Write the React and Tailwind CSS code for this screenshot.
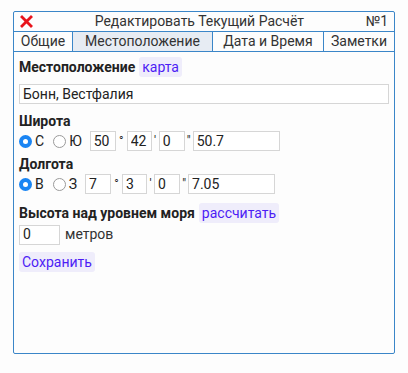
import React, { useState } from 'react'

const Radio = ({ checked, label, onClick }) => (
  <button onClick={onClick} className="flex items-center gap-[3px] mr-[9px]">
    <span
      className={
        checked
          ? 'w-[13px] h-[13px] rounded-full bg-[#1a85f3] flex items-center justify-center'
          : 'w-[13px] h-[13px] rounded-full border border-[#9a9a9a] bg-white'
      }
    >
      {checked && <span className="w-[5px] h-[5px] rounded-full bg-white" />}
    </span>
    <span>{label}</span>
  </button>
)

const Field = ({ value, className }) => (
  <input
    defaultValue={value}
    className={'h-[20px] border border-[#d6d6d6] bg-white px-[3px] outline-none ' + className}
  />
)

const CoordRow = ({ dirs, values }) => {
  const [dir, setDir] = useState(0)
  return (
    <div className="flex items-center h-[20px]">
      <Radio checked={dir === 0} label={dirs[0]} onClick={() => setDir(0)} />
      <Radio checked={dir === 1} label={dirs[1]} onClick={() => setDir(1)} />
      <Field value={values[0]} className="w-[26px] ml-[-1px]" />
      <span className="w-[11px] text-center text-[12px]">°</span>
      <Field value={values[1]} className="w-[25px]" />
      <span className="w-[7px] text-center text-[12px]">'</span>
      <Field value={values[2]} className="w-[26px]" />
      <span className="w-[8px] text-center text-[12px]">"</span>
      <Field value={values[3]} className="w-[87px]" />
    </div>
  )
}

const LinkButton = ({ children }) => (
  <button className="px-[3px] h-[20px] rounded-[3px] bg-[#efedfb] text-[#4d1df5]">{children}</button>
)

export default function App() {
  return (
    <div
      className="w-[408px] h-[373px] bg-[#fdfdfd] pt-[11px] pl-[13px] text-[14px] text-[#222]"
      style={{ fontFamily: 'Roboto, "Noto Sans", sans-serif' }}
    >
      <div className="w-[382px] h-[343px] border border-[#3b86c8] rounded-[2px] bg-[#fdfdfd] flex flex-col">
        <div className="h-[20px] flex items-center border-b border-[#3b86c8] px-[6px]">
          <svg width="13" height="13" viewBox="0 0 13 13">
            <path d="M2 2 L11 11 M11 2 L2 11" stroke="#e8141b" strokeWidth="2.8" strokeLinecap="square" />
          </svg>
          <div className="flex-1 text-center text-[14px] text-[#333]">Редактировать Текущий Расчёт</div>
          <div className="text-[14px] text-[#333]">№1</div>
        </div>
        <div className="h-[20px] flex border-b border-[#3b86c8] text-[14px] text-[#333]">
          <div className="w-[59px] border-r border-[#3b86c8] flex items-center justify-center">Общие</div>
          <div className="w-[140px] border-r border-[#3b86c8] bg-[#e7ecf3] flex items-center justify-center">Местоположение</div>
          <div className="w-[111px] border-r border-[#3b86c8] flex items-center justify-center">Дата и Время</div>
          <div className="flex-1 flex items-center justify-center">Заметки</div>
        </div>

        <div className="px-[5px] pt-[5px] flex flex-col">
          <div className="flex items-center gap-[4px] h-[20px]">
            <span className="font-bold">Местоположение</span>
            <LinkButton>карта</LinkButton>
          </div>
          <Field value="Бонн, Вестфалия" className="w-[370px] mt-[7px]" />

          <div className="font-bold mt-[7px] leading-[20px]">Широта</div>
          <CoordRow dirs={['С', 'Ю']} values={['50', '42', '0', '50.7']} />

          <div className="font-bold mt-[3px] leading-[20px]">Долгота</div>
          <CoordRow dirs={['В', 'З']} values={['7', '3', '0', '7.05']} />

          <div className="flex items-center gap-[4px] h-[20px] mt-[9px]">
            <span className="font-bold">Высота над уровнем моря</span>
            <LinkButton>рассчитать</LinkButton>
          </div>
          <div className="flex items-center gap-[5px] mt-[1px]">
            <Field value="0" className="w-[41px]" />
            <span className="text-[#333]">метров</span>
          </div>
          <div className="mt-[7px]">
            <LinkButton>Сохранить</LinkButton>
          </div>
        </div>
      </div>
    </div>
  )
}
